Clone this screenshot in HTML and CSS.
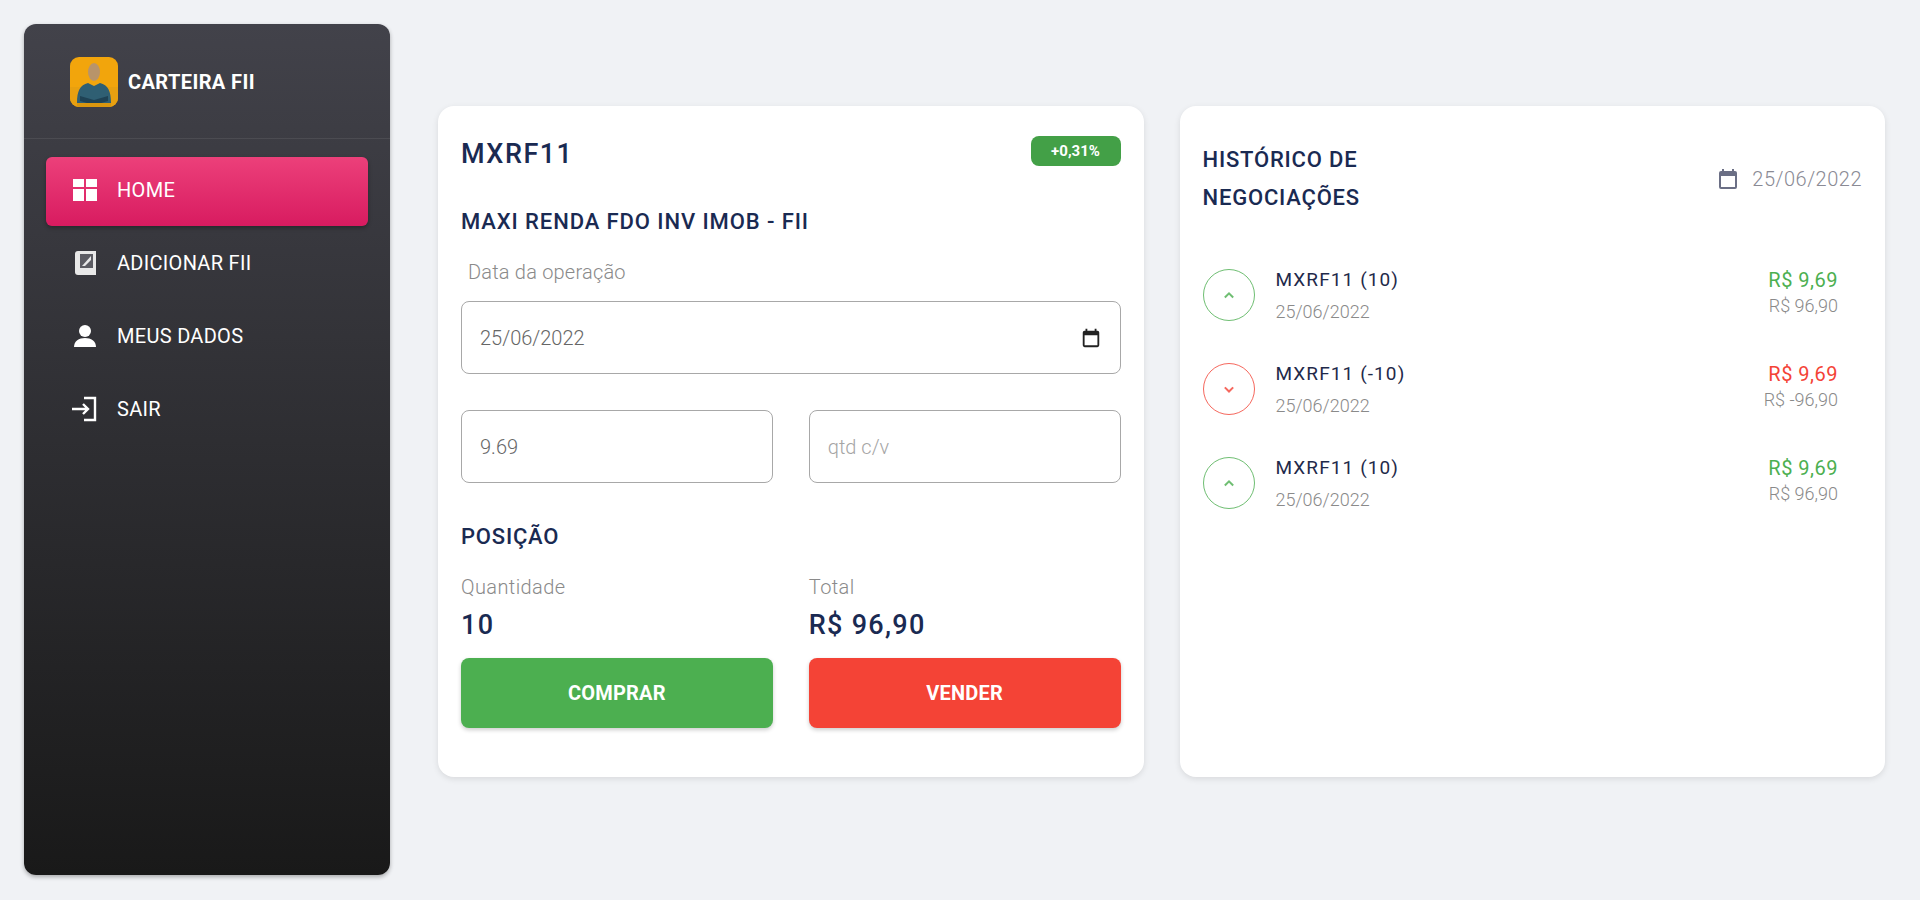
FILE: index.html
```html
<!DOCTYPE html>
<html lang="pt-BR">
<head>
    <meta charset="UTF-8">
    <meta name="viewport" content="width=device-width, initial-scale=1.0">
    <title>Carteira FII</title>
    <link rel="stylesheet" href="styles.css">
</head>
<body>
    <aside class="sidebar">
        <div class="brand">
            <svg class="brand-logo" viewBox="0 0 48 50">
                <rect width="48" height="50" fill="#f2a50c"/>
                <rect y="30" width="48" height="20" fill="#e8a010"/>
                <ellipse cx="24" cy="15" rx="6" ry="9" fill="#b8946a"/>
                <path d="M7 46c0-12 3-18 11-20l6 3 6-3c8 2 11 8 11 20z" fill="#2f5f73"/>
                <path d="M10 39l14 4 14-4v5l-14 4-14-4z" fill="#1f4254"/>
                <rect x="7" y="46" width="34" height="4" fill="#d9960e"/>
            </svg>
            <span class="brand-name">CARTEIRA FII</span>
        </div>
        <nav class="nav">
            <a class="nav-item active">
                <svg class="nav-icon" viewBox="0 0 26 26"><path d="M1 2h11v8H1zM14 2h11v8H14zM1 12h11v12H1zM14 12h11v12H14z" fill="#fff"/></svg>
                HOME
            </a>
            <a class="nav-item">
                <svg class="nav-icon" viewBox="0 0 26 26"><path d="M6 1h18v24H6a3 3 0 0 1-3-3V4a3 3 0 0 1 3-3z" fill="#e8e8e8"/><path d="M8 4h13v14H8z" fill="#5c5c63"/><path d="M10 16l9-10v4l-6 6z" fill="#e8e8e8"/></svg>
                ADICIONAR FII
            </a>
            <a class="nav-item">
                <svg class="nav-icon" viewBox="0 0 26 26"><circle cx="13" cy="8" r="6" fill="#fff"/><path d="M2 24c0-6 5-9 11-9s11 3 11 9z" fill="#fff"/></svg>
                MEUS DADOS
            </a>
            <a class="nav-item">
                <svg class="nav-icon" viewBox="0 0 26 26"><path d="M12 2h11v22H12M0 13h15M11 8l5 5-5 5" fill="none" stroke="#fff" stroke-width="2.4"/></svg>
                SAIR
            </a>
        </nav>
    </aside>

    <main class="content">
        <section class="card trade">
            <div class="trade-head">
                <h1 class="ticker">MXRF11</h1>
                <span class="badge">+0,31%</span>
            </div>
            <h2 class="fund-name">MAXI RENDA FDO INV IMOB - FII</h2>
            <label class="date-label" for="opDate">Data da operação</label>
            <div class="field">
                <input id="opDate" type="text" value="25/06/2022">
                <svg class="field-icon" viewBox="0 0 24 24"><path d="M19 4h-1V2h-2v2H8V2H6v2H5a2 2 0 0 0-2 2v14a2 2 0 0 0 2 2h14a2 2 0 0 0 2-2V6a2 2 0 0 0-2-2zm0 16H5V9h14z" fill="#222"/></svg>
            </div>
            <div class="two-cols inputs">
                <div class="field"><input type="text" value="9.69"></div>
                <div class="field"><input type="text" placeholder="qtd c/v"></div>
            </div>
            <h3 class="section-title">POSIÇÃO</h3>
            <div class="two-cols stats">
                <div>
                    <div class="stat-label">Quantidade</div>
                    <div class="stat-value">10</div>
                </div>
                <div>
                    <div class="stat-label">Total</div>
                    <div class="stat-value">R$ 96,90</div>
                </div>
            </div>
            <div class="two-cols">
                <button class="btn btn-buy">COMPRAR</button>
                <button class="btn btn-sell">VENDER</button>
            </div>
        </section>

        <section class="card history">
            <div class="history-head">
                <h2 class="history-title">HISTÓRICO DE<br>NEGOCIAÇÕES</h2>
                <div class="history-date">
                    <svg class="history-icon" viewBox="0 0 24 24"><path d="M19 4h-1V2h-2v2H8V2H6v2H5a2 2 0 0 0-2 2v14a2 2 0 0 0 2 2h14a2 2 0 0 0 2-2V6a2 2 0 0 0-2-2zm0 16H5V9h14z" fill="#6b6f85"/></svg>
                    25/06/2022
                </div>
            </div>
            <ul class="deals">
                <li class="deal up">
                    <span class="deal-arrow"><svg viewBox="0 0 24 24"><path d="M7 15l5-5 5 5"/></svg></span>
                    <div class="deal-info">
                        <div class="deal-name">MXRF11 (10)</div>
                        <div class="deal-date">25/06/2022</div>
                    </div>
                    <div class="deal-values">
                        <div class="deal-price">R$ 9,69</div>
                        <div class="deal-total">R$ 96,90</div>
                    </div>
                </li>
                <li class="deal down">
                    <span class="deal-arrow"><svg viewBox="0 0 24 24"><path d="M7 10l5 5 5-5"/></svg></span>
                    <div class="deal-info">
                        <div class="deal-name">MXRF11 (-10)</div>
                        <div class="deal-date">25/06/2022</div>
                    </div>
                    <div class="deal-values">
                        <div class="deal-price">R$ 9,69</div>
                        <div class="deal-total">R$ -96,90</div>
                    </div>
                </li>
                <li class="deal up">
                    <span class="deal-arrow"><svg viewBox="0 0 24 24"><path d="M7 15l5-5 5 5"/></svg></span>
                    <div class="deal-info">
                        <div class="deal-name">MXRF11 (10)</div>
                        <div class="deal-date">25/06/2022</div>
                    </div>
                    <div class="deal-values">
                        <div class="deal-price">R$ 9,69</div>
                        <div class="deal-total">R$ 96,90</div>
                    </div>
                </li>
            </ul>
        </section>
    </main>
</body>
</html>
```
FILE: styles.css
```css
* {
    box-sizing: border-box;
}
body {
    margin: 0;
    height: 900px;
    padding: 24px 35px 25px 24px;
    display: flex;
    font-family: Roboto, sans-serif;
    background-color: #f0f2f5;
    color: #1a2a52;
    overflow: hidden;
}
.sidebar {
    width: 366px;
    flex-shrink: 0;
    border-radius: 12px;
    background: linear-gradient(180deg, #42424a, #191919);
    box-shadow: 0 2px 4px rgba(0,0,0,0.3);
}
.brand {
    height: 115px;
    padding: 1px 0 0 46px;
    display: flex;
    align-items: center;
    gap: 10px;
    border-bottom: 1px solid rgba(255,255,255,0.08);
}
.brand-logo {
    width: 48px;
    height: 50px;
    border-radius: 9px;
}
.brand-name {
    color: #fff;
    font-size: 20px;
    font-weight: 700;
    letter-spacing: 0.4px;
}
.nav {
    padding: 18px 22px;
}
.nav-item {
    height: 69px;
    margin-bottom: 4px;
    padding: 0 0 3px 26px;
    display: flex;
    align-items: center;
    gap: 19px;
    border-radius: 6px;
    color: #fff;
    font-size: 20px;
    font-weight: 400;
    letter-spacing: 0.3px;
}
.nav-item.active {
    background: linear-gradient(180deg, #ec407a, #d81b60);
    box-shadow: 0 2px 4px rgba(0,0,0,0.3);
}
.nav-icon {
    width: 26px;
    height: 26px;
}
.content {
    flex: 1;
    padding: 82px 0 0 48px;
    display: flex;
    gap: 36px;
    align-items: flex-start;
}
.card {
    flex: 1;
    height: 671px;
    padding: 24px 23px;
    background-color: #fff;
    border-radius: 16px;
    box-shadow: 0 2px 6px rgba(0,0,0,0.1);
}
.trade-head {
    height: 46px;
    display: flex;
    justify-content: space-between;
    align-items: flex-start;
}
.ticker {
    margin: 8px 0 0;
    font-size: 27px;
    font-weight: 500;
    letter-spacing: 1.5px;
}
.badge {
    width: 90px;
    height: 30px;
    margin-top: 6px;
    display: flex;
    align-items: center;
    justify-content: center;
    border-radius: 8px;
    background-color: #43a047;
    color: #fff;
    font-size: 15px;
    font-weight: 700;
}
.fund-name {
    margin: 33px 0 0;
    font-size: 22px;
    font-weight: 500;
    letter-spacing: 0.9px;
}
.date-label {
    display: block;
    margin: 26px 0 17px 7px;
    color: #8a8a8a;
    font-size: 20px;
    font-weight: 300;
    letter-spacing: 0.2px;
}
.field {
    height: 73px;
    padding: 0 18px;
    display: flex;
    align-items: center;
    border: 1.5px solid #a8a8a8;
    border-radius: 8px;
}
.field input {
    flex: 1;
    width: 100%;
    border: none;
    outline: none;
    padding: 0;
    font-family: Roboto, sans-serif;
    font-size: 20px;
    font-weight: 300;
    color: #666;
}
.field input::placeholder {
    color: #a5a5a5;
}
.field-icon {
    width: 22px;
    height: 22px;
}
.two-cols {
    display: grid;
    grid-template-columns: 1fr 1fr;
    gap: 36px;
}
.inputs {
    margin-top: 36px;
}
.section-title {
    margin: 41px 0 0;
    font-size: 22px;
    font-weight: 500;
    letter-spacing: 0.8px;
}
.stats {
    margin-top: 26px;
    margin-bottom: 17px;
}
.stat-label {
    color: #8a8a8a;
    font-size: 20px;
    font-weight: 300;
    letter-spacing: 0.4px;
}
.stat-value {
    margin-top: 10px;
    font-size: 27px;
    font-weight: 500;
    letter-spacing: 1.3px;
}
.btn {
    height: 70px;
    border: none;
    border-radius: 8px;
    color: #fff;
    font-family: Roboto, sans-serif;
    font-size: 20px;
    font-weight: 700;
    letter-spacing: 0.2px;
    box-shadow: 0 2px 4px rgba(0,0,0,0.2);
}
.btn-buy {
    background-color: #4caf50;
}
.btn-sell {
    background-color: #f44336;
}
.history-head {
    display: flex;
    justify-content: space-between;
    align-items: center;
}
.history-title {
    margin: 11px 0 0;
    font-size: 22px;
    font-weight: 500;
    line-height: 38px;
    letter-spacing: 0.8px;
}
.history-date {
    margin-top: 11px;
    display: flex;
    align-items: center;
    gap: 12px;
    color: #8a8a94;
    font-size: 20px;
    font-weight: 300;
    letter-spacing: 0.5px;
}
.history-icon {
    width: 24px;
    height: 24px;
}
.deals {
    list-style: none;
    margin: 52px 0 0;
    padding: 0;
}
.deal {
    height: 94px;
    display: flex;
}
.deal-arrow {
    width: 52px;
    height: 52px;
    display: flex;
    align-items: center;
    justify-content: center;
    border: 1.5px solid;
    border-radius: 50%;
    opacity: 0.8;
}
.deal-arrow svg {
    width: 20px;
    height: 20px;
    fill: none;
    stroke: currentColor;
    stroke-width: 2.4;
}
.up .deal-arrow, .up .deal-price {
    color: #4caf50;
}
.down .deal-arrow, .down .deal-price {
    color: #f44336;
}
.deal-info {
    flex: 1;
    margin-left: 21px;
}
.deal-name {
    font-size: 19px;
    line-height: 22px;
    letter-spacing: 1.1px;
    color: #1f2a4a;
}
.deal-date {
    margin-top: 11px;
    color: #8a8a8a;
    font-size: 18px;
    line-height: 20px;
    font-weight: 300;
}
.deal-values {
    margin-right: 24px;
    text-align: right;
}
.deal-price {
    font-size: 20px;
    line-height: 22px;
    letter-spacing: 0.5px;
}
.deal-total {
    margin-top: 5px;
    color: #8a8a8a;
    font-size: 18px;
    line-height: 20px;
    font-weight: 300;
}
```
